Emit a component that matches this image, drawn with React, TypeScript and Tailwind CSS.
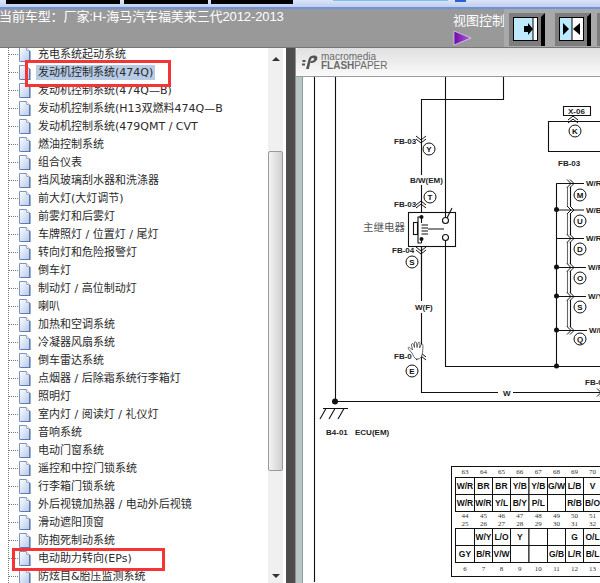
const rows = [
  "充电系统起动系统",
  "发动机控制系统(474Q)",
  "发动机控制系统(474Q—B)",
  "发动机控制系统(H13双燃料474Q—B",
  "发动机控制系统(479QMT / CVT",
  "燃油控制系统",
  "组合仪表",
  "挡风玻璃刮水器和洗涤器",
  "前大灯(大灯调节)",
  "前雾灯和后雾灯",
  "车牌照灯 / 位置灯 / 尾灯",
  "转向灯和危险报警灯",
  "倒车灯",
  "制动灯 / 高位制动灯",
  "喇叭",
  "加热和空调系统",
  "冷凝器风扇系统",
  "倒车雷达系统",
  "点烟器 / 后除霜系统行李箱灯",
  "照明灯",
  "室内灯 / 阅读灯 / 礼仪灯",
  "音响系统",
  "电动门窗系统",
  "遥控和中控门锁系统",
  "行李箱门锁系统",
  "外后视镜加热器 / 电动外后视镜",
  "滑动遮阳顶窗",
  "防抱死制动系统",
  "电动助力转向(EPs)",
  "防炫目&胎压监测系统",
];

function DocIcon() {
  return (
    <svg width="13" height="15" viewBox="0 0 13 15" className="shrink-0">
      <defs>
        <linearGradient id="doc" x1="0" y1="0" x2="1" y2="1">
          <stop offset="0" stopColor="#ffffff" />
          <stop offset="1" stopColor="#b4c8ea" />
        </linearGradient>
      </defs>
      <path d="M1.5 0.5H8.5L11.5 3.5V14.5H1.5Z" fill="url(#doc)" stroke="#7d93bd" />
      <path d="M8.5 0.5V3.5H11.5" fill="#ffffff" stroke="#9fb0cf" />
      <path d="M12 4V15H3" fill="none" stroke="#3f5f9c" strokeWidth="1" />
    </svg>
  );
}

function TreeRow({ label, selected }: { label: string; selected?: boolean }) {
  return (
    <div className="flex h-[18px] items-center">
      <div className="w-2 shrink-0" />
      <div className="h-0 w-[10px] shrink-0 border-t border-dotted border-[#777]" />
      <DocIcon />
      <span
        className={
          "ml-[5px] whitespace-nowrap px-[2px] leading-[15px] text-[#2a2a2a] " +
          (selected ? "bg-[#b6cbe6]" : "")
        }
      >
        {label}
      </span>
    </div>
  );
}

function ViewButton({ left, right, split }: { left?: boolean; right?: boolean; split: number }) {
  return (
    <div className="flex h-[38px] w-[46px] shrink-0 items-end justify-center bg-[#a9a9a9] pb-px">
      <div className="relative h-[33px] w-[36px] bg-[#7d7d7d]">
        <svg width="36" height="33" viewBox="0 0 36 33" className="block">
          <path d="M32 4L36 0V33H32Z" fill="#000" />
          <rect x="4.5" y="4.5" width="24" height="23" fill="#fff" stroke="#000" />
          <rect x="5" y="5" width={split} height="22" fill="#bdeaff" />
          <line x1={5 + split} y1="5" x2={5 + split} y2="27" stroke="#000" />
          {right && <path d="M15 13H19V10L24 16L19 22V19H15Z" fill="#000" />}
          {left && (
            <>
              <path d="M8 10L14 16L8 22Z" fill="#000" />
              <path d="M25 10V22L18 16Z" fill="#000" />
            </>
          )}
        </svg>
      </div>
    </div>
  );
}

function Circle({ x, y, t }: { x: number; y: number; t: string }) {
  return (
    <g>
      <circle cx={x} cy={y} r="6" fill="#fff" stroke="#111" strokeWidth="1" />
      <text x={x} y={y + 3} textAnchor="middle" fontSize="8" fontWeight="700" fill="#111">
        {t}
      </text>
    </g>
  );
}

function Label({ x, y, t }: { x: number; y: number; t: string }) {
  return (
    <text x={x} y={y} fontSize="8" fontWeight="700" fill="#222">
      {t}
    </text>
  );
}

function Chevrons({ x, y, dir }: { x: number; y: number; dir: "up" | "down" | "right" }) {
  if (dir === "right") {
    return (
      <path
        d={`M${x} ${y - 4}L${x + 4} ${y}L${x} ${y + 4}M${x + 3} ${y - 4}L${x + 7} ${y}L${x + 3} ${y + 4}`}
        fill="none"
        stroke="#111"
      />
    );
  }
  const s = dir === "down" ? 1 : -1;
  return (
    <path
      d={`M${x - 5} ${y - 3 * s}L${x} ${y + s}L${x + 5} ${y - 3 * s}M${x - 5} ${y}L${x} ${y + 4 * s}L${x + 5} ${y}`}
      fill="none"
      stroke="#111"
    />
  );
}

const busRows = [
  { y: 184, cy: 196, t: "M", w: "W/R", lx: 586, dot: false },
  { y: 210.5, cy: 222, t: "U", w: "W/B", lx: 586, dot: true },
  { y: 239, cy: 250, t: "D", w: "W/R", lx: 586, dot: false },
  { y: 268, cy: 279, t: "O", w: "W/F", lx: 588, dot: true },
  { y: 297, cy: 308, t: "S", w: "W/Y", lx: 588, dot: true },
  { y: 331, cy: 340, t: "Q", w: "W/L", lx: 589, dot: true },
];

const colX = [455.5, 474.5, 492.5, 510.5, 529, 547.5, 565.5, 583.5, 601.5];

const pinBlocks = [
  {
    y: 478,
    h: 17,
    cells: [
      ["W/R", "BR", "BR", "Y/B", "Y/B", "G/W", "L/B", "V"],
      ["W/R", "W/R", "Y/L", "B/Y", "P/L", "", "R/B", "B/O"],
    ],
  },
  {
    y: 529,
    h: 17,
    cells: [
      ["", "W/Y", "L/O", "Y", "", "", "G", "O/L"],
      ["GY", "B/R", "V/W", "", "", "G/B", "L/R", "B/L"],
    ],
  },
];

const numRows = [
  { y: 475, n: ["63", "64", "65", "66", "67", "68", "69", "70"] },
  { y: 519, n: ["44", "45", "46", "47", "48", "49", "50", "51"] },
  { y: 527, n: ["25", "26", "27", "28", "29", "30", "31", "32"] },
  { y: 572, n: ["6", "7", "8", "9", "10", "11", "12", "13"] },
];

function WiringDiagram() {
  return (
    <svg
      viewBox="303 78 297 505"
      width="297"
      height="505"
      className="block"
      fontFamily="'Liberation Sans', Arial, sans-serif"
    >
      <rect x="303" y="78" width="297" height="505" fill="#fff" />
      <g stroke="#111" strokeWidth="1.1" fill="none">
        <path d="M314.5 78V583" />
        <path d="M335.5 78V402.5H600" />
        <path d="M445.5 78V367.5H600" />
        <path d="M503.5 78V100.5H421.5V176M421.5 186V302M421.5 314V393.5H498M513 393.5H600" />
        <path d="M563.5 107.5H590.5V116.5H563.5Z" />
        <path d="M600 122.5H548.5V152.5H600" />
        <path d="M556.5 184.5V367.5M556.5 184.5H568" />
        <path d="M323 409.5H348M326 409.5L320 420M335 409.5L329 420M344 409.5L338 420" />
        <rect x="408.5" y="213.5" width="47" height="34" fill="#fff" />
        <path d="M421.5 247V290M445.5 213V222M445.5 238V247" />
        <path d="M421.5 218H418V244H421.5M421.5 218V224M421.5 240V244" />
        <rect x="413.5" y="223.5" width="4" height="12" />
        <path d="M421.5 226H428M421.5 229H428M421.5 232H428M421.5 235H428M428 230H444" />
        <circle cx="445.5" cy="221.5" r="3" fill="#fff" />
        <circle cx="445.5" cy="238.5" r="3" fill="#fff" />
        <path d="M447 219L452 209" />
        <path d="M567.5 188V207M567.5 214V236M567.5 243V265M567.5 272V294M567.5 301V328" stroke="#666" />
        <path d="M570.5 188V207M570.5 214V236M570.5 243V265M570.5 272V294M570.5 301V328" />
      </g>
      <g fill="#111">
        <circle cx="421.5" cy="218" r="2" />
        <circle cx="421.5" cy="240" r="2" />
        <circle cx="335" cy="402.5" r="3" />
        <circle cx="556.5" cy="367" r="2.5" />
      </g>

      <Chevrons x={421} y={140} dir="down" />
      <Chevrons x={421} y={206} dir="up" />
      <Chevrons x={421} y={251} dir="down" />
      <Chevrons x={421} y={358} dir="up" />
      <Chevrons x={573} y={121} dir="up" />
      <Chevrons x={597} y={393.5} dir="right" />

      <Circle x={575} y={132} t="K" />
      <Circle x={429} y={150} t="Y" />
      <Circle x={430} y={198} t="T" />
      <Circle x={412} y={263} t="S" />
      <Circle x={412} y={372} t="E" />

      <Label x={394} y={145} t="FB-03" />
      <Label x={410} y={184} t="B/W(EM)" />
      <Label x={394} y={208} t="FB-03" />
      <Label x={392} y={254} t="FB-04" />
      <Label x={415} y={311} t="W(F)" />
      <Label x={394} y={360} t="FB-0" />
      <Label x={503} y={397} t="W" />
      <Label x={585} y={386} t="FB-0" />
      <Label x={326} y={436} t="B4-01" />
      <Label x={355} y={436} t="ECU(EM)" />
      <Label x={558} y={167} t="FB-03" />
      <Label x={568} y={115} t="X-06" />
      <text x="363" y="232" fontSize="10.5" fill="#555" fontFamily="'Noto Sans CJK SC', serif">
        主继电器
      </text>

      {busRows.map((r) => (
        <g key={r.t}>
          <path d={`M556.5 ${r.y + 0.5}H${r.lx - 2}`} stroke="#111" fill="none" />
          <Chevrons x={567} y={r.y + 0.5} dir="right" />
          {r.dot && <circle cx="556.5" cy={r.y} r="2.5" fill="#111" />}
          <Circle x={580} y={r.cy} t={r.t} />
          <Label x={r.lx} y={r.y + 3} t={r.w} />
        </g>
      ))}

      {/* hand cursor */}
      <path
        d="M412 354L408.5 350C407.5 348.5 409 347.5 410.5 349L412.5 351L411.5 346C411.2 344.5 413.2 344 413.6 345.5L414.5 348.5L414.3 344C414.3 342.5 416.3 342.5 416.5 344L417 348.5L418 344.2C418.3 342.8 420.2 343 420 344.5L419.6 349L421 345.8C421.6 344.6 423.2 345.2 423 346.6C422.7 350 423 353 422 356C421.2 358.5 420 360 418 360H416C414.5 359.5 413 356 412 354Z"
        fill="#fff"
        stroke="#444"
        strokeWidth="0.8"
      />

      <rect x="451.5" y="467.5" width="160" height="110" fill="#fff" stroke="#111" />
      {numRows.map((row) =>
        row.n.map((n, i) => (
          <text
            key={row.y + n}
            x={(colX[i] + colX[i + 1]) / 2}
            y={row.y}
            textAnchor="middle"
            fontSize="7"
            fill="#333"
            fontFamily="'Liberation Serif', serif"
          >
            {n}
          </text>
        )),
      )}
      {pinBlocks.map((b) =>
        b.cells.map((line, ri) =>
          line.map((c, ci) => (
            <g key={`${b.y}-${ri}-${ci}`}>
              <rect
                x={colX[ci]}
                y={b.y + ri * b.h + 0.5}
                width={colX[ci + 1] - colX[ci]}
                height={b.h}
                fill="#fff"
                stroke="#111"
              />
              <text
                x={(colX[ci] + colX[ci + 1]) / 2}
                y={b.y + ri * b.h + 12}
                textAnchor="middle"
                fontSize="8.5"
                fontWeight="700"
                fill="#111"
              >
                {c}
              </text>
            </g>
          )),
        ),
      )}
    </svg>
  );
}

export default function App() {
  return (
    <div className="relative flex h-[583px] w-[600px] flex-col overflow-hidden bg-white font-['DejaVu_Sans','Noto_Sans_CJK_SC',sans-serif] text-[11px]">
      {/* browser tab strip */}
      <div className="h-[9px] shrink-0 bg-gradient-to-b from-[#dbe4f8] to-[#b9c9ee]">
        <div className="flex h-[4px]">
          <div className="ml-[6px] h-full w-[114px] bg-black" />
          <div className="ml-[4px] h-full w-[84px] bg-black" />
          <div className="ml-[3px] h-full w-[82px] bg-black" />
          <div className="ml-[40px] h-[1px] w-[115px] bg-[#7cc0ea]" />
          <div className="ml-[7px] h-[2px] w-[11px] bg-[#2e5fd0]" />
        </div>
        <div className="mt-[3px] h-[2px] bg-[#6f93d8]" />
      </div>

      {/* header */}
      <div className="flex h-[39px] shrink-0 items-start justify-between border-b border-[#777] bg-[#999999]">
        <div className="ml-[-1px] whitespace-nowrap font-['Liberation_Sans','Noto_Sans_CJK_SC',sans-serif] text-[13px] leading-[16px] tracking-[-0.1px] text-white">
          当前车型：厂家:H-海马汽车福美来三代2012-2013
        </div>
        <div className="flex shrink-0">
          <div className="flex w-[51px] flex-col font-['Noto_Sans_CJK_SC',sans-serif] text-[13px] leading-[16px] text-white">
            <span className="mt-[3px] whitespace-nowrap">视图控制</span>
            <svg width="20" height="16" viewBox="0 0 20 16" className="mt-[2px]">
              <defs>
                <linearGradient id="tri" x1="0" y1="0" x2="1" y2="0">
                  <stop offset="0" stopColor="#6a0aa8" />
                  <stop offset="1" stopColor="#b060e0" />
                </linearGradient>
              </defs>
              <path d="M1 1L18 8L1 15Z" fill="url(#tri)" stroke="#e8d8f4" strokeWidth="0.7" />
            </svg>
          </div>
          <ViewButton right split={19} />
          <ViewButton left split={12} />
          <div className="flex h-[38px] w-[4px] items-end bg-[#a9a9a9] pb-px">
            <div className="ml-px h-[33px] w-[3px] bg-[#7d7d7d]" />
          </div>
        </div>
      </div>

      {/* body */}
      <div className="flex min-h-0 flex-1">
        <div className="relative w-[268px] shrink-0 overflow-hidden">
          <div className="absolute bottom-0 left-2 top-0 border-l border-dotted border-[#777]" />
          <div className="-mt-[3px]">
            {rows.map((r, i) => (
              <TreeRow key={r} label={r} selected={i === 1} />
            ))}
          </div>
          <div className="absolute left-[25px] top-[12px] h-[27px] w-[146px] border-[3px] border-[#f53535]" />
          <div className="absolute left-[12px] top-[500px] h-[23px] w-[153px] border-[3px] border-[#f53535]" />
        </div>

        {/* tree scrollbar */}
        <div className="flex w-[15px] shrink-0 flex-col bg-[#f0f0f0]">
          <div className="flex h-[19px] items-center justify-center pt-[3px]">
            <div className="h-0 w-0 border-x-[4px] border-b-[4px] border-x-transparent border-b-[#333]" />
          </div>
          <div className="h-[84px] shrink-0" />
          <div className="h-[320px] shrink-0 rounded-[2px] border border-[#9a9a9a] bg-gradient-to-r from-[#f4f4f4] to-[#cfcfcf]" />
          <div className="flex-1" />
          <div className="flex h-[14px] items-center justify-center">
            <div className="h-0 w-0 border-x-[4px] border-t-[4px] border-x-transparent border-t-[#333]" />
          </div>
        </div>
        <div className="w-[3px] shrink-0 bg-white" />
        <div className="w-[9px] shrink-0 bg-[#4d4d4d]" />

        {/* flash paper viewer */}
        <div className="flex min-w-0 flex-1 flex-col border-l border-[#8f8f8f]">
          <div className="flex h-[29px] shrink-0 items-center rounded-tl-[3px] border-b border-[#9a9a9a] bg-gradient-to-b from-[#e0e0e0] to-[#fafafa] pl-[6px]">
            <svg width="16" height="16" viewBox="0 0 16 16" className="mr-[3px] shrink-0">
              <path
                d="M4 15L6.5 5.5C7 3 9 1.5 12 1.5C15 1.5 16 3.5 15 5.5C14 7.5 12 9 9.5 9H8.5L9 7C10.5 7 11.5 6.5 12 5.5C12.5 4.5 11.8 3.8 10.5 4C9.7 4.1 9.2 4.6 9 5.5L6.8 15Z"
                fill="#555"
              />
              <rect x="0.5" y="6" width="3" height="2" fill="#555" />
              <rect x="0" y="9.5" width="3" height="2" fill="#555" />
            </svg>
            <div className="flex flex-col font-['Liberation_Sans',sans-serif] text-[#6a6a6a]">
              <span className="text-[10px] leading-[8px]">macromedia</span>
              <span className="whitespace-nowrap text-[10px] leading-[10px]">
                <b className="font-bold">FLASH</b>PAPER
              </span>
            </div>
          </div>
          <div className="flex min-h-0 flex-1">
            <div className="w-[7px] shrink-0 border-r border-[#8f9d9d] bg-[#b8c6c6]" />
            <WiringDiagram />
          </div>
        </div>
      </div>
    </div>
  );
}
